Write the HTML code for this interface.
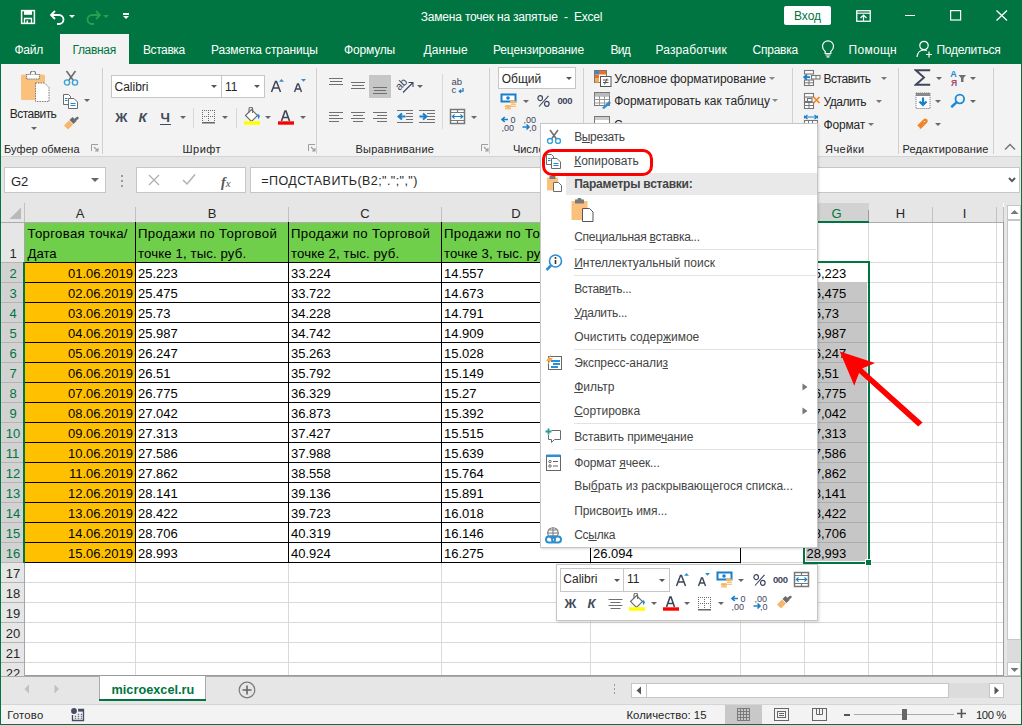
<!DOCTYPE html>
<html><head><meta charset="utf-8"><style>
*{box-sizing:border-box;margin:0;padding:0}
html,body{width:1022px;height:725px;overflow:hidden;background:#fff;font-family:"Liberation Sans",sans-serif;position:relative}
.a{position:absolute;display:block}
.t{position:absolute;white-space:nowrap}
u{text-decoration:underline;text-decoration-thickness:1px;text-underline-offset:1px;}
</style></head><body>
<div class="a" style="left:0px;top:0px;width:1022px;height:64px;background:#007541;"></div>
<svg class="a" style="left:20px;top:9px;" width="16" height="16" viewBox="0 0 16 16"><rect x="1.6" y="1.6" width="12.8" height="12.8" fill="none" stroke="#fff" stroke-width="1.5"/><rect x="4" y="1.6" width="8" height="4.2" fill="#fff"/><path d="M4.5 14.4V9.5H11.5V14.4" fill="none" stroke="#fff" stroke-width="1.3"/><rect x="6.5" y="11.5" width="1.6" height="3" fill="#fff"/></svg>
<svg class="a" style="left:49px;top:9px;" width="18" height="16" viewBox="0 0 18 16"><path d="M6 2L2 6L6 10" fill="none" stroke="#fff" stroke-width="1.8"/><path d="M2.5 6H10a4.5 4.5 0 0 1 0 9H8" fill="none" stroke="#fff" stroke-width="1.8"/></svg>
<svg class="a" style="left:69px;top:15px;" width="6" height="4" viewBox="0 0 6 4"><path d="M0 0H6L3 3Z" fill="#fff"/></svg>
<svg class="a" style="left:84px;top:9px;" width="18" height="16" viewBox="0 0 18 16"><path d="M12 2L16 6L12 10" fill="none" stroke="#25a150" stroke-width="1.8"/><path d="M15.5 6H8a4.5 4.5 0 0 0 0 9H10" fill="none" stroke="#25a150" stroke-width="1.8"/></svg>
<svg class="a" style="left:103px;top:15px;" width="6" height="4" viewBox="0 0 6 4"><path d="M0 0H6L3 3Z" fill="#25a150"/></svg>
<div class="a" style="left:123px;top:13px;width:6px;height:1.5px;background:#fff;"></div>
<svg class="a" style="left:123px;top:16px;" width="6" height="4" viewBox="0 0 6 4"><path d="M0 0H6L3 3Z" fill="#fff"/></svg>
<div class="t" style="left:420.8px;top:11.1px;font-size:12px;line-height:13.8px;color:#fff;letter-spacing:-0.198px;">Замена точек на запятые&nbsp; -&nbsp; Excel</div>
<div class="a" style="left:784px;top:6px;width:47px;height:19px;background:#fff;border-radius:2px"></div>
<div class="t" style="left:807.5px;top:10.1px;font-size:12px;line-height:13.8px;color:#007541;transform:translateX(-50%);">Вход</div>
<svg class="a" style="left:856px;top:10px;" width="15" height="12" viewBox="0 0 15 12"><rect x="0.75" y="0.75" width="13.5" height="10.5" fill="none" stroke="#fff" stroke-width="1.3"/><path d="M1 3.2H14" stroke="#fff" stroke-width="1.2"/><path d="M4.5 8L7.5 5L10.5 8M7.5 5V11" fill="none" stroke="#fff" stroke-width="1.2"/></svg>
<div class="a" style="left:905px;top:15px;width:10px;height:1.2px;background:#fff;"></div>
<svg class="a" style="left:950px;top:10px;" width="12" height="11" viewBox="0 0 12 11"><rect x="0.6" y="0.6" width="10" height="9.4" fill="none" stroke="#fff" stroke-width="1.2"/></svg>
<svg class="a" style="left:996px;top:10px;" width="12" height="11" viewBox="0 0 12 11"><path d="M0.5 0.5L11 10.5M11 0.5L0.5 10.5" stroke="#fff" stroke-width="1.3"/></svg>
<div class="a" style="left:60px;top:34px;width:69px;height:30px;background:#f3f3f3;"></div>
<div class="t" style="left:14.5px;top:43.6px;font-size:12px;line-height:13.8px;color:#fff;letter-spacing:-0.254px;">Файл</div>
<div class="t" style="left:72.4px;top:43.6px;font-size:12px;line-height:13.8px;color:#007541;letter-spacing:-0.312px;">Главная</div>
<div class="t" style="left:143px;top:43.6px;font-size:12px;line-height:13.8px;color:#fff;letter-spacing:-0.416px;">Вставка</div>
<div class="t" style="left:211px;top:43.6px;font-size:12px;line-height:13.8px;color:#fff;letter-spacing:-0.122px;">Разметка страницы</div>
<div class="t" style="left:344px;top:43.6px;font-size:12px;line-height:13.8px;color:#fff;letter-spacing:-0.174px;">Формулы</div>
<div class="t" style="left:423.4px;top:43.6px;font-size:12px;line-height:13.8px;color:#fff;letter-spacing:0.173px;">Данные</div>
<div class="t" style="left:492.9px;top:43.6px;font-size:12px;line-height:13.8px;color:#fff;letter-spacing:-0.112px;">Рецензирование</div>
<div class="t" style="left:610.4px;top:43.6px;font-size:12px;line-height:13.8px;color:#fff;letter-spacing:-0.706px;">Вид</div>
<div class="t" style="left:655.6px;top:43.6px;font-size:12px;line-height:13.8px;color:#fff;letter-spacing:0.111px;">Разработчик</div>
<div class="t" style="left:752.6px;top:43.6px;font-size:12px;line-height:13.8px;color:#fff;letter-spacing:-0.254px;">Справка</div>
<div class="t" style="left:848.5px;top:43.6px;font-size:12px;line-height:13.8px;color:#fff;letter-spacing:0.294px;">Помощн</div>
<div class="t" style="left:936.4px;top:43.6px;font-size:12px;line-height:13.8px;color:#fff;letter-spacing:-0.217px;">Поделиться</div>
<svg class="a" style="left:821px;top:40px;" width="14" height="18" viewBox="0 0 14 18"><path d="M4.2 11.5C2.5 10.2 1.5 8.3 1.5 6.3A5.5 5.5 0 0 1 12.5 6.3C12.5 8.3 11.5 10.2 9.8 11.5V13.5H4.2Z" fill="none" stroke="#fff" stroke-width="1.2"/><path d="M4.5 15H9.5M5.5 16.8H8.5" stroke="#fff" stroke-width="1.2"/></svg>
<svg class="a" style="left:916px;top:40px;" width="17" height="18" viewBox="0 0 17 18"><circle cx="8" cy="5.5" r="4.2" fill="none" stroke="#fff" stroke-width="1.2"/><path d="M1 17C1.5 12.5 4 10 8 10C9 10 10 10.2 10.8 10.6" fill="none" stroke="#fff" stroke-width="1.2"/><path d="M13 11.5V17.5M10 14.5H16" stroke="#fff" stroke-width="1.2"/></svg>
<div class="a" style="left:0px;top:64px;width:1022px;height:92px;background:#f3f3f3;"></div>
<div class="a" style="left:0px;top:156px;width:1022px;height:1px;background:#d4d4d4;"></div>
<div class="a" style="left:102px;top:68px;width:1px;height:86px;background:#d0d0d0;"></div>
<div class="a" style="left:316px;top:68px;width:1px;height:86px;background:#d0d0d0;"></div>
<div class="a" style="left:489px;top:68px;width:1px;height:86px;background:#d0d0d0;"></div>
<div class="a" style="left:583px;top:68px;width:1px;height:86px;background:#d0d0d0;"></div>
<div class="a" style="left:792px;top:68px;width:1px;height:86px;background:#d0d0d0;"></div>
<div class="a" style="left:898px;top:68px;width:1px;height:86px;background:#d0d0d0;"></div>
<div class="a" style="left:993px;top:68px;width:1px;height:86px;background:#d0d0d0;"></div>
<div class="a" style="left:442px;top:74px;width:1px;height:55px;background:#d8d8d8;"></div>
<div class="a" style="left:193px;top:108px;width:1px;height:20px;background:#d8d8d8;"></div>
<div class="a" style="left:236px;top:108px;width:1px;height:20px;background:#d8d8d8;"></div>
<div class="t" style="left:4px;top:142.65px;font-size:11px;line-height:12.65px;color:#262626;letter-spacing:0.079px;">Буфер обмена</div>
<div class="t" style="left:182.6px;top:142.65px;font-size:11px;line-height:12.65px;color:#262626;letter-spacing:0.419px;">Шрифт</div>
<div class="t" style="left:355.5px;top:142.65px;font-size:11px;line-height:12.65px;color:#262626;letter-spacing:0.248px;">Выравнивание</div>
<div class="t" style="left:512.9px;top:142.65px;font-size:11px;line-height:12.65px;color:#262626;">Число</div>
<div class="t" style="left:825px;top:142.65px;font-size:11px;line-height:12.65px;color:#262626;letter-spacing:0.466px;">Ячейки</div>
<div class="t" style="left:902.5px;top:142.65px;font-size:11px;line-height:12.65px;color:#262626;letter-spacing:0.157px;">Редактирование</div>
<svg class="a" style="left:90.5px;top:144px;opacity:.8" width="8" height="8" viewBox="0 0 8 8"><path d="M0.5 7V0.5H7" fill="none" stroke="#8a8a8a" stroke-width="1"/><path d="M3 3L7 7M4 7H7V4" fill="none" stroke="#8a8a8a" stroke-width="1.1"/></svg>
<svg class="a" style="left:308px;top:144px;opacity:.8" width="8" height="8" viewBox="0 0 8 8"><path d="M0.5 7V0.5H7" fill="none" stroke="#8a8a8a" stroke-width="1"/><path d="M3 3L7 7M4 7H7V4" fill="none" stroke="#8a8a8a" stroke-width="1.1"/></svg>
<svg class="a" style="left:481px;top:144px;opacity:.8" width="8" height="8" viewBox="0 0 8 8"><path d="M0.5 7V0.5H7" fill="none" stroke="#8a8a8a" stroke-width="1"/><path d="M3 3L7 7M4 7H7V4" fill="none" stroke="#8a8a8a" stroke-width="1.1"/></svg>
<svg class="a" style="left:573px;top:144px;opacity:.8" width="8" height="8" viewBox="0 0 8 8"><path d="M0.5 7V0.5H7" fill="none" stroke="#8a8a8a" stroke-width="1"/><path d="M3 3L7 7M4 7H7V4" fill="none" stroke="#8a8a8a" stroke-width="1.1"/></svg>
<svg class="a" style="left:1004px;top:143px;" width="12" height="8" viewBox="0 0 12 8"><path d="M1 6.5L6 1.5L11 6.5" fill="none" stroke="#777" stroke-width="1.5"/></svg>
<svg class="a" style="left:20px;top:71px;" width="30" height="32" viewBox="0 0 30 32"><rect x="1" y="3.5" width="24" height="25.5" rx="1.5" fill="#fbc17c"/><rect x="6.5" y="3.5" width="13" height="4.5" fill="#fff" stroke="#7a7a7a" stroke-width="1.2" stroke-dasharray="1.2 0.6"/><path d="M10.5 3.5V2.2A2.5 2.2 0 0 1 15.5 2.2V3.5" fill="#fff" stroke="#7a7a7a" stroke-width="1.2"/><path d="M15.5 12H24.5L29 16.5V30.5H15.5Z" fill="#fff" stroke="#7a7a7a" stroke-width="1" stroke-dasharray="1.5 1"/></svg>
<div class="t" style="left:9.8px;top:107.9px;font-size:12px;line-height:13.8px;color:#262626;letter-spacing:-0.547px;">Вставить</div>
<svg class="a" style="left:30.5px;top:127px;" width="6" height="4" viewBox="0 0 6 4"><path d="M0 0H6L3 3Z" fill="#666"/></svg>
<svg class="a" style="left:63px;top:70px;" width="16" height="16" viewBox="0 0 16 16"><path d="M3.5 1L10 10M12.5 1L6 10" stroke="#6b6b6b" stroke-width="1.6"/><circle cx="4" cy="12.5" r="2.6" fill="none" stroke="#3aa0d8" stroke-width="1.4"/><circle cx="12" cy="12.5" r="2.6" fill="none" stroke="#3aa0d8" stroke-width="1.4"/></svg>
<svg class="a" style="left:62px;top:93px;" width="17" height="16" viewBox="0 0 17 16"><path d="M1.5 1.5H6.5L8.5 3.5V11.5H1.5Z" fill="#fff" stroke="#6b6b6b" stroke-width="1"/><path d="M3 5.5H5.5M3 7.5H5.5" stroke="#1a8ad4" stroke-width="1"/><path d="M6.5 5.5H12L15.5 9V15.5H6.5Z" fill="#fff" stroke="#6b6b6b" stroke-width="1"/><path d="M8.5 10.5H13.5M8.5 12.5H13.5" stroke="#1a8ad4" stroke-width="1"/></svg>
<svg class="a" style="left:84px;top:99px;" width="6" height="4" viewBox="0 0 6 4"><path d="M0 0H6L3 3Z" fill="#666"/></svg>
<svg class="a" style="left:63px;top:116px;" width="17" height="15" viewBox="0 0 17 15"><path d="M1 9.5L6 4.5L10 8.5L5 13.5Z" fill="#f9b46a"/><path d="M6.5 4L9.5 1L13.5 5L10.5 8Z" fill="#6b6b6b"/><path d="M11 3L14.5 0.5L16 2L13 5" fill="#6b6b6b"/></svg>
<div class="a" style="left:111px;top:75px;width:111px;height:23px;background:#fff;border:1px solid #c6c6c6"></div>
<div class="a" style="left:221px;top:75px;width:44px;height:23px;background:#fff;border:1px solid #c6c6c6"></div>
<div class="t" style="left:114.5px;top:81.1px;font-size:12px;line-height:13.8px;color:#262626;">Calibri</div>
<div class="t" style="left:225px;top:81.1px;font-size:12px;line-height:13.8px;color:#262626;">11</div>
<svg class="a" style="left:211px;top:85px;" width="6" height="4" viewBox="0 0 6 4"><path d="M0 0H6L3 3Z" fill="#555"/></svg>
<svg class="a" style="left:254px;top:85px;" width="6" height="4" viewBox="0 0 6 4"><path d="M0 0H6L3 3Z" fill="#555"/></svg>
<svg class="a" style="left:270px;top:78px;" width="15" height="15" viewBox="0 0 15 15"><path d="M1.5 14L5.5 3.5H6.5L10.5 14M3 10H9" fill="none" stroke="#3f465a" stroke-width="1.5"/><path d="M9 3.8L11.5 1L14 3.8Z" fill="#2b8fd1"/></svg>
<svg class="a" style="left:293px;top:78px;" width="14" height="15" viewBox="0 0 14 15"><path d="M1.5 14L4.5 6H5.5L8.5 14M2.7 11H7.3" fill="none" stroke="#3f465a" stroke-width="1.4"/><path d="M8 1H13L10.5 3.8Z" fill="#2b8fd1"/></svg>
<div class="t" style="left:115.2px;top:109.72px;font-size:13.5px;line-height:15.52px;color:#444b5a;font-weight:bold;letter-spacing:0.297px;">Ж</div>
<div class="t" style="left:138.5px;top:109.72px;font-size:13.5px;line-height:15.52px;color:#444b5a;font-weight:bold;font-style:italic">К</div>
<div class="t" style="left:160.5px;top:110.12px;font-size:13.5px;line-height:15.52px;color:#444b5a;font-weight:bold;">Ч</div>
<div class="a" style="left:160px;top:124px;width:11px;height:1.3px;background:#444b5a;"></div>
<svg class="a" style="left:179.6px;top:116px;" width="6" height="4" viewBox="0 0 6 4"><path d="M0 0H6L3 3Z" fill="#666"/></svg>
<svg class="a" style="left:202px;top:110px;" width="14" height="14" viewBox="0 0 14 14"><g fill="#6a6a6a"><rect x="0" y="0" width="1" height="1"/><rect x="2" y="0" width="1" height="1"/><rect x="4" y="0" width="1" height="1"/><rect x="6" y="0" width="1" height="1"/><rect x="8" y="0" width="1" height="1"/><rect x="10" y="0" width="1" height="1"/><rect x="12" y="0" width="1" height="1"/><rect x="0" y="6" width="1" height="1"/><rect x="2" y="6" width="1" height="1"/><rect x="4" y="6" width="1" height="1"/><rect x="6" y="6" width="1" height="1"/><rect x="8" y="6" width="1" height="1"/><rect x="10" y="6" width="1" height="1"/><rect x="12" y="6" width="1" height="1"/><rect x="0" y="2" width="1" height="1"/><rect x="0" y="4" width="1" height="1"/><rect x="0" y="6" width="1" height="1"/><rect x="0" y="8" width="1" height="1"/><rect x="0" y="10" width="1" height="1"/><rect x="6" y="2" width="1" height="1"/><rect x="6" y="4" width="1" height="1"/><rect x="6" y="6" width="1" height="1"/><rect x="6" y="8" width="1" height="1"/><rect x="6" y="10" width="1" height="1"/><rect x="12" y="2" width="1" height="1"/><rect x="12" y="4" width="1" height="1"/><rect x="12" y="6" width="1" height="1"/><rect x="12" y="8" width="1" height="1"/><rect x="12" y="10" width="1" height="1"/></g><rect x="0" y="12" width="13" height="1.5" fill="#666"/></svg>
<svg class="a" style="left:222.4px;top:116px;" width="6" height="4" viewBox="0 0 6 4"><path d="M0 0H6L3 3Z" fill="#666"/></svg>
<svg class="a" style="left:243px;top:107px;" width="18" height="18" viewBox="0 0 18 18"><path d="M2.5 8.5L8.5 2.5L14.5 8.5L8.5 14.5Z" fill="#fff" stroke="#6a6a6a" stroke-width="1.1"/><path d="M6 5.5V2A1.8 1.8 0 0 1 9.6 2V6" fill="none" stroke="#6a6a6a" stroke-width="1.1"/><path d="M14.8 6.5L17 9L15.5 12.5L14.5 9Z" fill="#1a8ad4"/><rect x="1" y="14.2" width="16" height="3.6" fill="#ffff00"/></svg>
<svg class="a" style="left:265.4px;top:116px;" width="6" height="4" viewBox="0 0 6 4"><path d="M0 0H6L3 3Z" fill="#666"/></svg>
<svg class="a" style="left:277px;top:109px;" width="17" height="16" viewBox="0 0 17 16"><path d="M4.5 12L8 2H9L12.5 12M5.8 8.5H11.2" fill="none" stroke="#3f465a" stroke-width="1.6"/><rect x="1" y="12.3" width="16" height="3.4" fill="#ff0000"/></svg>
<svg class="a" style="left:299.6px;top:116px;" width="6" height="4" viewBox="0 0 6 4"><path d="M0 0H6L3 3Z" fill="#666"/></svg>
<div class="a" style="left:329px;top:78px;width:14px;height:1px;background:#707070;"></div>
<div class="a" style="left:330px;top:81px;width:12px;height:1px;background:#707070;"></div>
<div class="a" style="left:329px;top:84px;width:14px;height:1px;background:#707070;"></div>
<div class="a" style="left:351px;top:82px;width:14px;height:1px;background:#707070;"></div>
<div class="a" style="left:352px;top:85px;width:12px;height:1px;background:#707070;"></div>
<div class="a" style="left:351px;top:88px;width:14px;height:1px;background:#707070;"></div>
<div class="a" style="left:369px;top:75px;width:22px;height:23px;background:#c6c6c6;"></div>
<div class="a" style="left:373px;top:87px;width:14px;height:1px;background:#707070;"></div>
<div class="a" style="left:374px;top:90px;width:12px;height:1px;background:#707070;"></div>
<div class="a" style="left:373px;top:93px;width:14px;height:1px;background:#707070;"></div>
<div class="a" style="left:329px;top:112px;width:14px;height:1px;background:#707070;"></div>
<div class="a" style="left:351px;top:112px;width:14px;height:1px;background:#707070;"></div>
<div class="a" style="left:373px;top:112px;width:14px;height:1px;background:#707070;"></div>
<div class="a" style="left:329px;top:115px;width:10px;height:1px;background:#707070;"></div>
<div class="a" style="left:353px;top:115px;width:10px;height:1px;background:#707070;"></div>
<div class="a" style="left:377px;top:115px;width:10px;height:1px;background:#707070;"></div>
<div class="a" style="left:329px;top:118px;width:14px;height:1px;background:#707070;"></div>
<div class="a" style="left:351px;top:118px;width:14px;height:1px;background:#707070;"></div>
<div class="a" style="left:373px;top:118px;width:14px;height:1px;background:#707070;"></div>
<div class="a" style="left:329px;top:121px;width:10px;height:1px;background:#707070;"></div>
<div class="a" style="left:353px;top:121px;width:10px;height:1px;background:#707070;"></div>
<div class="a" style="left:377px;top:121px;width:10px;height:1px;background:#707070;"></div>
<svg class="a" style="left:396px;top:77px;" width="19" height="17" viewBox="0 0 19 17"><text x="0" y="0" font-size="11" fill="#3f465e" font-family="Liberation Sans" transform="translate(3.5 14) rotate(-45)">ab</text><path d="M7 15.5L16.5 6M12.5 5.5H17V10" fill="none" stroke="#3f465e" stroke-width="1.1"/></svg>
<svg class="a" style="left:416.5px;top:85px;" width="6" height="4" viewBox="0 0 6 4"><path d="M0 0H6L3 3Z" fill="#666"/></svg>
<svg class="a" style="left:450px;top:77px;" width="16" height="17" viewBox="0 0 16 17"><text x="1.5" y="8.3" font-size="9.5" fill="#3f465e" font-family="Liberation Sans">ab</text><text x="1.5" y="16" font-size="9.5" fill="#3f465e" font-family="Liberation Sans">c</text><path d="M13 11V14.2H9.5M11 12.6L9.3 14.2L11 15.8" fill="none" stroke="#1a7fc9" stroke-width="1.3"/></svg>
<div class="a" style="left:397px;top:110px;width:16px;height:1px;background:#707070;"></div>
<div class="a" style="left:406px;top:113px;width:7px;height:1px;background:#707070;"></div>
<div class="a" style="left:406px;top:116px;width:7px;height:1px;background:#707070;"></div>
<div class="a" style="left:406px;top:119px;width:7px;height:1px;background:#707070;"></div>
<div class="a" style="left:397px;top:122px;width:16px;height:1px;background:#707070;"></div>
<div class="a" style="left:419px;top:110px;width:16px;height:1px;background:#707070;"></div>
<div class="a" style="left:427px;top:113px;width:8px;height:1px;background:#707070;"></div>
<div class="a" style="left:427px;top:116px;width:8px;height:1px;background:#707070;"></div>
<div class="a" style="left:427px;top:119px;width:8px;height:1px;background:#707070;"></div>
<div class="a" style="left:419px;top:122px;width:16px;height:1px;background:#707070;"></div>
<svg class="a" style="left:397px;top:112px;" width="9" height="9" viewBox="0 0 9 9"><path d="M8.5 4.5H2M5 1.5L1.5 4.5L5 7.5" fill="none" stroke="#1a7fc9" stroke-width="2"/></svg>
<svg class="a" style="left:419px;top:112px;" width="9" height="9" viewBox="0 0 9 9"><path d="M0.5 4.5H7M4 1.5L7.5 4.5L4 7.5" fill="none" stroke="#1a7fc9" stroke-width="2"/></svg>
<svg class="a" style="left:449px;top:108px;" width="17" height="17" viewBox="0 0 17 17"><rect x="1.5" y="1.5" width="14" height="14" fill="#fff" stroke="#777" stroke-width="1.5"/><path d="M1 4.5H16M1 12.5H16M8.5 1V4.5M8.5 12.5V16" stroke="#777" stroke-width="1.2"/><path d="M3.5 8.5H13.5M5.5 6.5L3.3 8.5L5.5 10.5M11.5 6.5L13.7 8.5L11.5 10.5" fill="none" stroke="#1a7fc9" stroke-width="1.1"/></svg>
<svg class="a" style="left:471.3px;top:116px;" width="6" height="4" viewBox="0 0 6 4"><path d="M0 0H6L3 3Z" fill="#666"/></svg>
<div class="a" style="left:498px;top:67px;width:78px;height:22px;background:#fff;border:1px solid #c6c6c6"></div>
<div class="t" style="left:501.7px;top:73.1px;font-size:12px;line-height:13.8px;color:#262626;">Общий</div>
<svg class="a" style="left:565.7px;top:77px;" width="6" height="4" viewBox="0 0 6 4"><path d="M0 0H6L3 3Z" fill="#555"/></svg>
<svg class="a" style="left:500px;top:93px;" width="18" height="18" viewBox="0 0 18 18"><rect x="1.5" y="1.5" width="14" height="7" fill="#fff" stroke="#1a7fc9" stroke-width="2"/><circle cx="8" cy="5" r="1.8" fill="#1a7fc9"/><ellipse cx="13" cy="9" rx="3.2" ry="1.4" fill="#f9b460"/><path d="M11 11.3H16M11 13.3H16" stroke="#f9b460" stroke-width="1"/><ellipse cx="8" cy="13.5" rx="3.2" ry="1.4" fill="#f9b460"/><path d="M5 15.8H11" stroke="#f9b460" stroke-width="1.2"/></svg>
<svg class="a" style="left:522.6px;top:99.5px;" width="6" height="4" viewBox="0 0 6 4"><path d="M0 0H6L3 3Z" fill="#666"/></svg>
<svg class="a" style="left:537px;top:95px;" width="13" height="12" viewBox="0 0 13 12"><path d="M11.5 0.8L2 11.5" stroke="#3f465e" stroke-width="1.1"/><ellipse cx="3.2" cy="3.2" rx="2.3" ry="2.5" fill="none" stroke="#3f465e" stroke-width="1.2"/><ellipse cx="9.8" cy="8.8" rx="2.3" ry="2.5" fill="none" stroke="#3f465e" stroke-width="1.2"/></svg>
<div class="t" style="left:557.5px;top:96.22px;font-size:9.5px;line-height:10.92px;color:#3f465e;font-weight:bold;letter-spacing:-0.453px;">000</div>
<svg class="a" style="left:501px;top:116px;" width="17" height="16" viewBox="0 0 17 16"><path d="M1 3.5H7M3.8 1L1 3.5L3.8 6" fill="none" stroke="#1a7fc9" stroke-width="1.6"/><text x="9.5" y="7" font-size="9" fill="#3f465e" font-family="Liberation Sans">0</text><text x="0.5" y="15" font-size="9" fill="#3f465e" font-family="Liberation Sans">,00</text></svg>
<svg class="a" style="left:522px;top:116px;" width="17" height="16" viewBox="0 0 17 16"><text x="1.5" y="7" font-size="9" fill="#3f465e" font-family="Liberation Sans">,00</text><path d="M0.5 11H7M4.5 8.5L7 11L4.5 13.5" fill="none" stroke="#1a7fc9" stroke-width="1.6"/><text x="7" y="15" font-size="9" fill="#3f465e" font-family="Liberation Sans">,0</text></svg>
<svg class="a" style="left:594px;top:70px;" width="18" height="17" viewBox="0 0 18 17"><rect x="0.5" y="0.5" width="12" height="12" fill="#fff" stroke="#777"/><rect x="1" y="1" width="4" height="3.5" fill="#2b8fd1"/><rect x="5" y="1" width="7" height="3.5" fill="#f26b21"/><rect x="1" y="4.5" width="4" height="4" fill="#f26b21"/><rect x="1" y="8.5" width="4" height="4" fill="#f7a94b"/><rect x="6.5" y="6.5" width="10.5" height="10" fill="#fff" stroke="#555"/><path d="M9 10H14.5M9 12.5H14.5M10.5 14.5L13 8.5" stroke="#555" stroke-width="1"/></svg>
<div class="t" style="left:614.2px;top:72.8px;font-size:12px;line-height:13.8px;color:#262626;letter-spacing:-0.038px;">Условное форматирование</div>
<svg class="a" style="left:768.5px;top:77px;" width="6" height="4" viewBox="0 0 6 4"><path d="M0 0H6L3 3Z" fill="#888"/></svg>
<svg class="a" style="left:594px;top:92px;" width="18" height="17" viewBox="0 0 18 17"><rect x="0.5" y="0.5" width="15" height="13" fill="#fff" stroke="#777"/><path d="M0.5 4H15.5M0.5 7.5H15.5M0.5 11H15.5M5.5 0.5V13.5M10.5 0.5V13.5" stroke="#999" stroke-width="1"/><rect x="1" y="1" width="14.5" height="3" fill="#bbb"/><path d="M8 16L15 9L17 11L10 17Z" fill="#2b8fd1"/></svg>
<div class="t" style="left:614.2px;top:95.2px;font-size:12px;line-height:13.8px;color:#262626;letter-spacing:-0.018px;">Форматировать как таблицу</div>
<svg class="a" style="left:772.3px;top:99px;" width="6" height="4" viewBox="0 0 6 4"><path d="M0 0H6L3 3Z" fill="#888"/></svg>
<svg class="a" style="left:594px;top:116px;" width="18" height="8" viewBox="0 0 18 8"><rect x="0.5" y="0.5" width="15" height="10" fill="#fff" stroke="#777"/><rect x="1" y="1" width="14" height="3" fill="#ccc"/></svg>
<div class="t" style="left:614px;top:119.1px;font-size:12px;line-height:13.8px;color:#262626;">С</div>
<svg class="a" style="left:803px;top:69px;" width="19" height="18" viewBox="0 0 19 18"><rect x="1.5" y="1.5" width="9" height="3.5" fill="#fff" stroke="#777" stroke-width="1.1"/><rect x="8.5" y="6.5" width="8.5" height="3.5" fill="#fff" stroke="#777" stroke-width="1.1"/><path d="M13 6.5V10" stroke="#777" stroke-width="1"/><rect x="1.5" y="11" width="9" height="5.5" fill="#fff" stroke="#777" stroke-width="1.1"/><path d="M1.5 13.8H10.5M6 11V16.5" stroke="#777" stroke-width="1"/><path d="M7 8.2H1.5M4 5.6L1.2 8.2L4 10.8" fill="none" stroke="#1a7fc9" stroke-width="1.8"/></svg>
<div class="t" style="left:823.5px;top:73.0px;font-size:12px;line-height:13.8px;color:#262626;letter-spacing:-0.472px;">Вставить</div>
<svg class="a" style="left:880.6px;top:77px;" width="6" height="4" viewBox="0 0 6 4"><path d="M0 0H6L3 3Z" fill="#777"/></svg>
<svg class="a" style="left:803px;top:92px;" width="19" height="18" viewBox="0 0 19 18"><rect x="1.5" y="1.5" width="9" height="3.5" fill="#fff" stroke="#777" stroke-width="1.1"/><path d="M1.5 5V9.5H4.5" fill="none" stroke="#777" stroke-width="1.1"/><rect x="4.5" y="6.5" width="4.5" height="3" fill="#fff" stroke="#777" stroke-width="1.1"/><rect x="1.5" y="10.5" width="9" height="6" fill="#fff" stroke="#777" stroke-width="1.1"/><path d="M1.5 13.5H10.5M6 10.5V16.5" stroke="#777" stroke-width="1"/><path d="M10.5 5L16.5 11M16.5 5L10.5 11" stroke="#f7821f" stroke-width="1.7"/></svg>
<div class="t" style="left:823.5px;top:95.8px;font-size:12px;line-height:13.8px;color:#262626;letter-spacing:-0.475px;">Удалить</div>
<svg class="a" style="left:876.3px;top:100px;" width="6" height="4" viewBox="0 0 6 4"><path d="M0 0H6L3 3Z" fill="#777"/></svg>
<svg class="a" style="left:803px;top:114px;" width="18" height="11" viewBox="0 0 18 11"><path d="M1.5 1.5V4.5M14.5 1.5V4.5M2 3H14M4.5 1L2 3L4.5 5M11.5 1L14 3L11.5 5" fill="none" stroke="#1a7fc9" stroke-width="1.1"/><rect x="1.5" y="6.5" width="13" height="6" fill="#fff" stroke="#777" stroke-width="1.1"/><path d="M5.5 6.5V9M9.5 6.5V9" stroke="#777"/></svg>
<div class="t" style="left:823.5px;top:118.6px;font-size:12px;line-height:13.8px;color:#262626;letter-spacing:-0.190px;">Формат</div>
<svg class="a" style="left:868px;top:123px;" width="6" height="4" viewBox="0 0 6 4"><path d="M0 0H6L3 3Z" fill="#777"/></svg>
<svg class="a" style="left:914px;top:69px;" width="18" height="17" viewBox="0 0 18 17"><path d="M16.2 1.3H1.8L10 8.5L1.8 15.7H16.2" fill="none" stroke="#3f465e" stroke-width="1.9" stroke-linejoin="miter"/></svg>
<svg class="a" style="left:936.4px;top:77px;" width="6" height="4" viewBox="0 0 6 4"><path d="M0 0H6L3 3Z" fill="#666"/></svg>
<svg class="a" style="left:949px;top:68px;" width="19" height="20" viewBox="0 0 19 20"><text x="1.2" y="8.6" font-size="9" font-weight="bold" fill="#1a8ad4" font-family="Liberation Sans">A</text><text x="2" y="18" font-size="8.5" font-weight="bold" fill="#a34a6a" font-family="Liberation Sans">Я</text><path d="M9.5 7H17L14.5 10V14H12V10Z" fill="#6e6e6e"/></svg>
<svg class="a" style="left:969.6px;top:77px;" width="6" height="4" viewBox="0 0 6 4"><path d="M0 0H6L3 3Z" fill="#666"/></svg>
<svg class="a" style="left:915px;top:92px;" width="17" height="18" viewBox="0 0 17 18"><rect x="1" y="1" width="14" height="15.5" fill="#fff" stroke="#808080" stroke-width="1" stroke-dasharray="1.2 0.8"/><rect x="1" y="1" width="14" height="3" fill="#8a8a8a"/><path d="M8 5.5V13M4.5 9.5L8 13L11.5 9.5" fill="none" stroke="#1a7fc9" stroke-width="2.2"/></svg>
<svg class="a" style="left:934.5px;top:100px;" width="6" height="4" viewBox="0 0 6 4"><path d="M0 0H6L3 3Z" fill="#666"/></svg>
<svg class="a" style="left:950px;top:93px;" width="16" height="15" viewBox="0 0 16 15"><circle cx="9.8" cy="6" r="4.3" fill="none" stroke="#1a8ad4" stroke-width="1.8"/><path d="M6.7 9.2L2 13.5" stroke="#1a8ad4" stroke-width="2.4" stroke-linecap="round"/></svg>
<svg class="a" style="left:969.6px;top:100px;" width="6" height="4" viewBox="0 0 6 4"><path d="M0 0H6L3 3Z" fill="#666"/></svg>
<svg class="a" style="left:916px;top:117px;" width="13" height="13" viewBox="0 0 13 13"><path d="M1.2 8.5L7.5 2.2C8.5 1.2 10 1.2 11 2.2C12 3.2 12 4.7 11 5.7L4.5 12.2Z" fill="#f2852a"/><path d="M1.5 9L4 11.5" stroke="#f3f3f3" stroke-width="0.9"/><circle cx="8.5" cy="4.5" r="0.6" fill="#fff"/></svg>
<svg class="a" style="left:934.5px;top:123px;" width="6" height="4" viewBox="0 0 6 4"><path d="M0 0H6L3 3Z" fill="#666"/></svg>
<div class="a" style="left:0px;top:157px;width:1022px;height:46px;background:#e6e6e6;"></div>
<div class="a" style="left:4px;top:167px;width:102px;height:26px;background:#fff;border:1px solid #c6c6c6"></div>
<div class="t" style="left:11px;top:174.65px;font-size:13px;line-height:14.95px;color:#262626;">G2</div>
<svg class="a" style="left:91px;top:178px;" width="8" height="5" viewBox="0 0 8 5"><path d="M0 0H8L4 4Z" fill="#666"/></svg>
<div class="a" style="left:120.5px;top:175px;width:2px;height:2px;background:#9a9a9a;"></div>
<div class="a" style="left:120.5px;top:180px;width:2px;height:2px;background:#9a9a9a;"></div>
<div class="a" style="left:120.5px;top:185px;width:2px;height:2px;background:#9a9a9a;"></div>
<div class="a" style="left:136px;top:167px;width:110px;height:26px;background:#fff;border:1px solid #c6c6c6"></div>
<svg class="a" style="left:148px;top:174px;" width="12" height="12" viewBox="0 0 12 12"><path d="M1 1L11 11M11 1L1 11" stroke="#b0b0b0" stroke-width="1.3"/></svg>
<svg class="a" style="left:182px;top:173px;" width="14" height="13" viewBox="0 0 14 13"><path d="M1 7L5 11L13 1.5" fill="none" stroke="#b0b0b0" stroke-width="1.5"/></svg>
<div class="t" style="left:221px;top:174.2px;font-size:14px;line-height:16.1px;color:#555;"><i style="font-family:Liberation Serif;font-weight:bold">f</i><i style="font-family:Liberation Serif;font-size:11px">x</i></div>
<div class="a" style="left:250px;top:167px;width:770px;height:26px;background:#fff;border:1px solid #c6c6c6"></div>
<div class="t" style="left:261.3px;top:173.88px;font-size:12.5px;line-height:14.37px;color:#262626;letter-spacing:0.422px;">=ПОДСТАВИТЬ(B2;".";",")</div>
<svg class="a" style="left:1007.5px;top:176.5px;" width="8" height="6" viewBox="0 0 8 6"><path d="M1 1L4 4.2L7 1" fill="none" stroke="#555" stroke-width="1.9"/></svg>
<div class="a" style="left:0px;top:203px;width:1003px;height:19px;background:#e6e6e6;"></div>
<div class="a" style="left:0px;top:222px;width:1003px;height:1px;background:#ababab;"></div>
<svg class="a" style="left:9px;top:207px;" width="13" height="13" viewBox="0 0 13 13"><path d="M12 0.5V12H0.5Z" fill="#b9b9b9"/></svg>
<div class="a" style="left:135px;top:207px;width:1px;height:15px;background:#c0c0c0;"></div>
<div class="t" style="left:80.0px;top:206.95px;font-size:13px;line-height:14.95px;color:#262626;transform:translateX(-50%);">A</div>
<div class="a" style="left:288px;top:207px;width:1px;height:15px;background:#c0c0c0;"></div>
<div class="t" style="left:212.0px;top:206.95px;font-size:13px;line-height:14.95px;color:#262626;transform:translateX(-50%);">B</div>
<div class="a" style="left:441px;top:207px;width:1px;height:15px;background:#c0c0c0;"></div>
<div class="t" style="left:365.0px;top:206.95px;font-size:13px;line-height:14.95px;color:#262626;transform:translateX(-50%);">C</div>
<div class="a" style="left:590px;top:207px;width:1px;height:15px;background:#c0c0c0;"></div>
<div class="t" style="left:516.0px;top:206.95px;font-size:13px;line-height:14.95px;color:#262626;transform:translateX(-50%);">D</div>
<div class="a" style="left:740px;top:207px;width:1px;height:15px;background:#c0c0c0;"></div>
<div class="t" style="left:665.5px;top:206.95px;font-size:13px;line-height:14.95px;color:#262626;transform:translateX(-50%);">E</div>
<div class="a" style="left:804px;top:207px;width:1px;height:15px;background:#c0c0c0;"></div>
<div class="t" style="left:772.5px;top:206.95px;font-size:13px;line-height:14.95px;color:#262626;transform:translateX(-50%);">F</div>
<div class="a" style="left:805px;top:203px;width:64px;height:19px;background:#d2d2d2;"></div>
<div class="a" style="left:868px;top:210px;width:1px;height:12px;background:#9b9b9b;"></div>
<div class="t" style="left:836.5px;top:206.95px;font-size:13px;line-height:14.95px;color:#007541;transform:translateX(-50%);">G</div>
<div class="a" style="left:932px;top:207px;width:1px;height:15px;background:#c0c0c0;"></div>
<div class="t" style="left:900.5px;top:206.95px;font-size:13px;line-height:14.95px;color:#262626;transform:translateX(-50%);">H</div>
<div class="a" style="left:996px;top:207px;width:1px;height:15px;background:#c0c0c0;"></div>
<div class="t" style="left:964.5px;top:206.95px;font-size:13px;line-height:14.95px;color:#262626;transform:translateX(-50%);">I</div>
<div class="a" style="left:1003px;top:207px;width:1px;height:15px;background:#c0c0c0;"></div>
<div class="a" style="left:24px;top:203px;width:1px;height:19px;background:#c0c0c0;"></div>
<div class="a" style="left:805px;top:221px;width:64px;height:2px;background:#007541;"></div>
<div class="a" style="left:1px;top:223px;width:23px;height:453px;background:#e6e6e6;"></div>
<div class="a" style="left:1px;top:262px;width:23px;height:1px;background:#b4b4b4;"></div>
<div class="t" style="left:9.5px;top:247.15px;font-size:13px;line-height:14.95px;color:#262626;">1</div>
<div class="a" style="left:1px;top:263px;width:23px;height:20px;background:#d2d2d2;"></div>
<div class="a" style="left:1px;top:282px;width:23px;height:1px;background:#b4b4b4;"></div>
<div class="t" style="left:9.5px;top:267.15px;font-size:13px;line-height:14.95px;color:#007541;">2</div>
<div class="a" style="left:1px;top:283px;width:23px;height:20px;background:#d2d2d2;"></div>
<div class="a" style="left:1px;top:302px;width:23px;height:1px;background:#b4b4b4;"></div>
<div class="t" style="left:9.5px;top:287.15px;font-size:13px;line-height:14.95px;color:#007541;">3</div>
<div class="a" style="left:1px;top:303px;width:23px;height:20px;background:#d2d2d2;"></div>
<div class="a" style="left:1px;top:322px;width:23px;height:1px;background:#b4b4b4;"></div>
<div class="t" style="left:9.5px;top:307.15px;font-size:13px;line-height:14.95px;color:#007541;">4</div>
<div class="a" style="left:1px;top:323px;width:23px;height:20px;background:#d2d2d2;"></div>
<div class="a" style="left:1px;top:342px;width:23px;height:1px;background:#b4b4b4;"></div>
<div class="t" style="left:9.5px;top:327.15px;font-size:13px;line-height:14.95px;color:#007541;">5</div>
<div class="a" style="left:1px;top:343px;width:23px;height:20px;background:#d2d2d2;"></div>
<div class="a" style="left:1px;top:362px;width:23px;height:1px;background:#b4b4b4;"></div>
<div class="t" style="left:9.5px;top:347.15px;font-size:13px;line-height:14.95px;color:#007541;">6</div>
<div class="a" style="left:1px;top:363px;width:23px;height:20px;background:#d2d2d2;"></div>
<div class="a" style="left:1px;top:382px;width:23px;height:1px;background:#b4b4b4;"></div>
<div class="t" style="left:9.5px;top:367.15px;font-size:13px;line-height:14.95px;color:#007541;">7</div>
<div class="a" style="left:1px;top:383px;width:23px;height:20px;background:#d2d2d2;"></div>
<div class="a" style="left:1px;top:402px;width:23px;height:1px;background:#b4b4b4;"></div>
<div class="t" style="left:9.5px;top:387.15px;font-size:13px;line-height:14.95px;color:#007541;">8</div>
<div class="a" style="left:1px;top:403px;width:23px;height:20px;background:#d2d2d2;"></div>
<div class="a" style="left:1px;top:422px;width:23px;height:1px;background:#b4b4b4;"></div>
<div class="t" style="left:9.5px;top:407.15px;font-size:13px;line-height:14.95px;color:#007541;">9</div>
<div class="a" style="left:1px;top:423px;width:23px;height:20px;background:#d2d2d2;"></div>
<div class="a" style="left:1px;top:442px;width:23px;height:1px;background:#b4b4b4;"></div>
<div class="t" style="left:5.8px;top:427.15px;font-size:13px;line-height:14.95px;color:#007541;">10</div>
<div class="a" style="left:1px;top:443px;width:23px;height:20px;background:#d2d2d2;"></div>
<div class="a" style="left:1px;top:462px;width:23px;height:1px;background:#b4b4b4;"></div>
<div class="t" style="left:5.8px;top:447.15px;font-size:13px;line-height:14.95px;color:#007541;">11</div>
<div class="a" style="left:1px;top:463px;width:23px;height:20px;background:#d2d2d2;"></div>
<div class="a" style="left:1px;top:482px;width:23px;height:1px;background:#b4b4b4;"></div>
<div class="t" style="left:5.8px;top:467.15px;font-size:13px;line-height:14.95px;color:#007541;">12</div>
<div class="a" style="left:1px;top:483px;width:23px;height:20px;background:#d2d2d2;"></div>
<div class="a" style="left:1px;top:502px;width:23px;height:1px;background:#b4b4b4;"></div>
<div class="t" style="left:5.8px;top:487.15px;font-size:13px;line-height:14.95px;color:#007541;">13</div>
<div class="a" style="left:1px;top:503px;width:23px;height:20px;background:#d2d2d2;"></div>
<div class="a" style="left:1px;top:522px;width:23px;height:1px;background:#b4b4b4;"></div>
<div class="t" style="left:5.8px;top:507.15px;font-size:13px;line-height:14.95px;color:#007541;">14</div>
<div class="a" style="left:1px;top:523px;width:23px;height:20px;background:#d2d2d2;"></div>
<div class="a" style="left:1px;top:542px;width:23px;height:1px;background:#b4b4b4;"></div>
<div class="t" style="left:5.8px;top:527.15px;font-size:13px;line-height:14.95px;color:#007541;">15</div>
<div class="a" style="left:1px;top:543px;width:23px;height:20px;background:#d2d2d2;"></div>
<div class="a" style="left:1px;top:562px;width:23px;height:1px;background:#b4b4b4;"></div>
<div class="t" style="left:5.8px;top:547.15px;font-size:13px;line-height:14.95px;color:#007541;">16</div>
<div class="a" style="left:1px;top:582px;width:23px;height:1px;background:#b4b4b4;"></div>
<div class="t" style="left:5.8px;top:567.15px;font-size:13px;line-height:14.95px;color:#262626;">17</div>
<div class="a" style="left:1px;top:602px;width:23px;height:1px;background:#b4b4b4;"></div>
<div class="t" style="left:5.8px;top:587.15px;font-size:13px;line-height:14.95px;color:#262626;">18</div>
<div class="a" style="left:1px;top:622px;width:23px;height:1px;background:#b4b4b4;"></div>
<div class="t" style="left:5.8px;top:607.15px;font-size:13px;line-height:14.95px;color:#262626;">19</div>
<div class="a" style="left:1px;top:642px;width:23px;height:1px;background:#b4b4b4;"></div>
<div class="t" style="left:5.8px;top:627.15px;font-size:13px;line-height:14.95px;color:#262626;">20</div>
<div class="a" style="left:1px;top:662px;width:23px;height:1px;background:#b4b4b4;"></div>
<div class="t" style="left:5.8px;top:647.15px;font-size:13px;line-height:14.95px;color:#262626;">21</div>
<div class="a" style="left:1px;top:682px;width:23px;height:1px;background:#b4b4b4;"></div>
<div class="t" style="left:5.8px;top:667.15px;font-size:13px;line-height:14.95px;color:#262626;">22</div>
<div class="a" style="left:24px;top:222px;width:1px;height:454px;background:#a6a6a6;"></div>
<div class="a" style="left:23px;top:262px;width:2px;height:301px;background:#007541;"></div>
<div class="a" style="left:25px;top:262px;width:978px;height:1px;background:#d9d9d9;"></div>
<div class="a" style="left:25px;top:282px;width:978px;height:1px;background:#d9d9d9;"></div>
<div class="a" style="left:25px;top:302px;width:978px;height:1px;background:#d9d9d9;"></div>
<div class="a" style="left:25px;top:322px;width:978px;height:1px;background:#d9d9d9;"></div>
<div class="a" style="left:25px;top:342px;width:978px;height:1px;background:#d9d9d9;"></div>
<div class="a" style="left:25px;top:362px;width:978px;height:1px;background:#d9d9d9;"></div>
<div class="a" style="left:25px;top:382px;width:978px;height:1px;background:#d9d9d9;"></div>
<div class="a" style="left:25px;top:402px;width:978px;height:1px;background:#d9d9d9;"></div>
<div class="a" style="left:25px;top:422px;width:978px;height:1px;background:#d9d9d9;"></div>
<div class="a" style="left:25px;top:442px;width:978px;height:1px;background:#d9d9d9;"></div>
<div class="a" style="left:25px;top:462px;width:978px;height:1px;background:#d9d9d9;"></div>
<div class="a" style="left:25px;top:482px;width:978px;height:1px;background:#d9d9d9;"></div>
<div class="a" style="left:25px;top:502px;width:978px;height:1px;background:#d9d9d9;"></div>
<div class="a" style="left:25px;top:522px;width:978px;height:1px;background:#d9d9d9;"></div>
<div class="a" style="left:25px;top:542px;width:978px;height:1px;background:#d9d9d9;"></div>
<div class="a" style="left:25px;top:562px;width:978px;height:1px;background:#d9d9d9;"></div>
<div class="a" style="left:25px;top:582px;width:978px;height:1px;background:#d9d9d9;"></div>
<div class="a" style="left:25px;top:602px;width:978px;height:1px;background:#d9d9d9;"></div>
<div class="a" style="left:25px;top:622px;width:978px;height:1px;background:#d9d9d9;"></div>
<div class="a" style="left:25px;top:642px;width:978px;height:1px;background:#d9d9d9;"></div>
<div class="a" style="left:25px;top:662px;width:978px;height:1px;background:#d9d9d9;"></div>
<div class="a" style="left:25px;top:682px;width:978px;height:1px;background:#d9d9d9;"></div>
<div class="a" style="left:135px;top:223px;width:1px;height:453px;background:#d9d9d9;"></div>
<div class="a" style="left:288px;top:223px;width:1px;height:453px;background:#d9d9d9;"></div>
<div class="a" style="left:441px;top:223px;width:1px;height:453px;background:#d9d9d9;"></div>
<div class="a" style="left:590px;top:223px;width:1px;height:453px;background:#d9d9d9;"></div>
<div class="a" style="left:740px;top:223px;width:1px;height:453px;background:#d9d9d9;"></div>
<div class="a" style="left:804px;top:223px;width:1px;height:453px;background:#d9d9d9;"></div>
<div class="a" style="left:868px;top:223px;width:1px;height:453px;background:#d9d9d9;"></div>
<div class="a" style="left:932px;top:223px;width:1px;height:453px;background:#d9d9d9;"></div>
<div class="a" style="left:996px;top:223px;width:1px;height:453px;background:#d9d9d9;"></div>
<div class="a" style="left:1003px;top:223px;width:1px;height:453px;background:#d9d9d9;"></div>
<div class="a" style="left:25px;top:223px;width:565px;height:39px;background:#6fce4a;"></div>
<div class="a" style="left:25px;top:263px;width:110px;height:300px;background:#ffc000;"></div>
<div class="a" style="left:806px;top:282px;width:61px;height:279px;background:#c6c6c6;"></div>
<div class="a" style="left:806px;top:302px;width:61px;height:1px;background:#ababab;"></div>
<div class="a" style="left:806px;top:322px;width:61px;height:1px;background:#ababab;"></div>
<div class="a" style="left:806px;top:342px;width:61px;height:1px;background:#ababab;"></div>
<div class="a" style="left:806px;top:362px;width:61px;height:1px;background:#ababab;"></div>
<div class="a" style="left:806px;top:382px;width:61px;height:1px;background:#ababab;"></div>
<div class="a" style="left:806px;top:402px;width:61px;height:1px;background:#ababab;"></div>
<div class="a" style="left:806px;top:422px;width:61px;height:1px;background:#ababab;"></div>
<div class="a" style="left:806px;top:442px;width:61px;height:1px;background:#ababab;"></div>
<div class="a" style="left:806px;top:462px;width:61px;height:1px;background:#ababab;"></div>
<div class="a" style="left:806px;top:482px;width:61px;height:1px;background:#ababab;"></div>
<div class="a" style="left:806px;top:502px;width:61px;height:1px;background:#ababab;"></div>
<div class="a" style="left:806px;top:522px;width:61px;height:1px;background:#ababab;"></div>
<div class="a" style="left:806px;top:542px;width:61px;height:1px;background:#ababab;"></div>
<div class="a" style="left:135px;top:222px;width:1px;height:341px;background:#000;"></div>
<div class="a" style="left:288px;top:222px;width:1px;height:341px;background:#000;"></div>
<div class="a" style="left:441px;top:222px;width:1px;height:341px;background:#000;"></div>
<div class="a" style="left:590px;top:222px;width:1px;height:341px;background:#000;"></div>
<div class="a" style="left:740px;top:222px;width:1px;height:341px;background:#000;"></div>
<div class="a" style="left:25px;top:262px;width:716px;height:1px;background:#000;"></div>
<div class="a" style="left:25px;top:282px;width:716px;height:1px;background:#000;"></div>
<div class="a" style="left:25px;top:302px;width:716px;height:1px;background:#000;"></div>
<div class="a" style="left:25px;top:322px;width:716px;height:1px;background:#000;"></div>
<div class="a" style="left:25px;top:342px;width:716px;height:1px;background:#000;"></div>
<div class="a" style="left:25px;top:362px;width:716px;height:1px;background:#000;"></div>
<div class="a" style="left:25px;top:382px;width:716px;height:1px;background:#000;"></div>
<div class="a" style="left:25px;top:402px;width:716px;height:1px;background:#000;"></div>
<div class="a" style="left:25px;top:422px;width:716px;height:1px;background:#000;"></div>
<div class="a" style="left:25px;top:442px;width:716px;height:1px;background:#000;"></div>
<div class="a" style="left:25px;top:462px;width:716px;height:1px;background:#000;"></div>
<div class="a" style="left:25px;top:482px;width:716px;height:1px;background:#000;"></div>
<div class="a" style="left:25px;top:502px;width:716px;height:1px;background:#000;"></div>
<div class="a" style="left:25px;top:522px;width:716px;height:1px;background:#000;"></div>
<div class="a" style="left:25px;top:542px;width:716px;height:1px;background:#000;"></div>
<div class="a" style="left:25px;top:562px;width:716px;height:1px;background:#000;"></div>
<div class="t" style="left:27.6px;top:226.06px;font-size:13.2px;line-height:15.18px;color:#000;letter-spacing:0.319px;">Торговая точка/</div>
<div class="t" style="left:27.6px;top:246.06px;font-size:13.2px;line-height:15.18px;color:#000;letter-spacing:-0.051px;">Дата</div>
<div class="t" style="left:138px;top:226.06px;font-size:13.2px;line-height:15.18px;color:#000;letter-spacing:0.385px;">Продажи по Торговой</div>
<div class="t" style="left:138px;top:246.06px;font-size:13.2px;line-height:15.18px;color:#000;letter-spacing:0.123px;">точке 1, тыс. руб.</div>
<div class="t" style="left:291px;top:226.06px;font-size:13.2px;line-height:15.18px;color:#000;letter-spacing:0.385px;">Продажи по Торговой</div>
<div class="t" style="left:291px;top:246.06px;font-size:13.2px;line-height:15.18px;color:#000;letter-spacing:0.123px;">точке 2, тыс. руб.</div>
<div class="t" style="left:444px;top:226.06px;font-size:13.2px;line-height:15.18px;color:#000;letter-spacing:0.385px;">Продажи по Торговой</div>
<div class="t" style="left:444px;top:246.06px;font-size:13.2px;line-height:15.18px;color:#000;letter-spacing:0.123px;">точке 3, тыс. руб.</div>
<div class="t" style="right:889px;top:267.15px;font-size:13px;line-height:14.95px;color:#000;">01.06.2019</div>
<div class="t" style="left:138px;top:267.15px;font-size:13px;line-height:14.95px;color:#000;">25.223</div>
<div class="t" style="left:291px;top:267.15px;font-size:13px;line-height:14.95px;color:#000;">33.224</div>
<div class="t" style="left:444px;top:267.15px;font-size:13px;line-height:14.95px;color:#000;">14.557</div>
<div class="t" style="left:806.5px;top:267.15px;font-size:13px;line-height:14.95px;color:#000;">25,223</div>
<div class="t" style="right:889px;top:287.15px;font-size:13px;line-height:14.95px;color:#000;">02.06.2019</div>
<div class="t" style="left:138px;top:287.15px;font-size:13px;line-height:14.95px;color:#000;">25.475</div>
<div class="t" style="left:291px;top:287.15px;font-size:13px;line-height:14.95px;color:#000;">33.722</div>
<div class="t" style="left:444px;top:287.15px;font-size:13px;line-height:14.95px;color:#000;">14.673</div>
<div class="t" style="left:806.5px;top:287.15px;font-size:13px;line-height:14.95px;color:#000;">25,475</div>
<div class="t" style="right:889px;top:307.15px;font-size:13px;line-height:14.95px;color:#000;">03.06.2019</div>
<div class="t" style="left:138px;top:307.15px;font-size:13px;line-height:14.95px;color:#000;">25.73</div>
<div class="t" style="left:291px;top:307.15px;font-size:13px;line-height:14.95px;color:#000;">34.228</div>
<div class="t" style="left:444px;top:307.15px;font-size:13px;line-height:14.95px;color:#000;">14.791</div>
<div class="t" style="left:806.5px;top:307.15px;font-size:13px;line-height:14.95px;color:#000;">25,73</div>
<div class="t" style="right:889px;top:327.15px;font-size:13px;line-height:14.95px;color:#000;">04.06.2019</div>
<div class="t" style="left:138px;top:327.15px;font-size:13px;line-height:14.95px;color:#000;">25.987</div>
<div class="t" style="left:291px;top:327.15px;font-size:13px;line-height:14.95px;color:#000;">34.742</div>
<div class="t" style="left:444px;top:327.15px;font-size:13px;line-height:14.95px;color:#000;">14.909</div>
<div class="t" style="left:806.5px;top:327.15px;font-size:13px;line-height:14.95px;color:#000;">25,987</div>
<div class="t" style="right:889px;top:347.15px;font-size:13px;line-height:14.95px;color:#000;">05.06.2019</div>
<div class="t" style="left:138px;top:347.15px;font-size:13px;line-height:14.95px;color:#000;">26.247</div>
<div class="t" style="left:291px;top:347.15px;font-size:13px;line-height:14.95px;color:#000;">35.263</div>
<div class="t" style="left:444px;top:347.15px;font-size:13px;line-height:14.95px;color:#000;">15.028</div>
<div class="t" style="left:806.5px;top:347.15px;font-size:13px;line-height:14.95px;color:#000;">26,247</div>
<div class="t" style="right:889px;top:367.15px;font-size:13px;line-height:14.95px;color:#000;">06.06.2019</div>
<div class="t" style="left:138px;top:367.15px;font-size:13px;line-height:14.95px;color:#000;">26.51</div>
<div class="t" style="left:291px;top:367.15px;font-size:13px;line-height:14.95px;color:#000;">35.792</div>
<div class="t" style="left:444px;top:367.15px;font-size:13px;line-height:14.95px;color:#000;">15.149</div>
<div class="t" style="left:806.5px;top:367.15px;font-size:13px;line-height:14.95px;color:#000;">26,51</div>
<div class="t" style="right:889px;top:387.15px;font-size:13px;line-height:14.95px;color:#000;">07.06.2019</div>
<div class="t" style="left:138px;top:387.15px;font-size:13px;line-height:14.95px;color:#000;">26.775</div>
<div class="t" style="left:291px;top:387.15px;font-size:13px;line-height:14.95px;color:#000;">36.329</div>
<div class="t" style="left:444px;top:387.15px;font-size:13px;line-height:14.95px;color:#000;">15.27</div>
<div class="t" style="left:806.5px;top:387.15px;font-size:13px;line-height:14.95px;color:#000;">26,775</div>
<div class="t" style="right:889px;top:407.15px;font-size:13px;line-height:14.95px;color:#000;">08.06.2019</div>
<div class="t" style="left:138px;top:407.15px;font-size:13px;line-height:14.95px;color:#000;">27.042</div>
<div class="t" style="left:291px;top:407.15px;font-size:13px;line-height:14.95px;color:#000;">36.873</div>
<div class="t" style="left:444px;top:407.15px;font-size:13px;line-height:14.95px;color:#000;">15.392</div>
<div class="t" style="left:806.5px;top:407.15px;font-size:13px;line-height:14.95px;color:#000;">27,042</div>
<div class="t" style="right:889px;top:427.15px;font-size:13px;line-height:14.95px;color:#000;">09.06.2019</div>
<div class="t" style="left:138px;top:427.15px;font-size:13px;line-height:14.95px;color:#000;">27.313</div>
<div class="t" style="left:291px;top:427.15px;font-size:13px;line-height:14.95px;color:#000;">37.427</div>
<div class="t" style="left:444px;top:427.15px;font-size:13px;line-height:14.95px;color:#000;">15.515</div>
<div class="t" style="left:806.5px;top:427.15px;font-size:13px;line-height:14.95px;color:#000;">27,313</div>
<div class="t" style="right:889px;top:447.15px;font-size:13px;line-height:14.95px;color:#000;">10.06.2019</div>
<div class="t" style="left:138px;top:447.15px;font-size:13px;line-height:14.95px;color:#000;">27.586</div>
<div class="t" style="left:291px;top:447.15px;font-size:13px;line-height:14.95px;color:#000;">37.988</div>
<div class="t" style="left:444px;top:447.15px;font-size:13px;line-height:14.95px;color:#000;">15.639</div>
<div class="t" style="left:806.5px;top:447.15px;font-size:13px;line-height:14.95px;color:#000;">27,586</div>
<div class="t" style="right:889px;top:467.15px;font-size:13px;line-height:14.95px;color:#000;">11.06.2019</div>
<div class="t" style="left:138px;top:467.15px;font-size:13px;line-height:14.95px;color:#000;">27.862</div>
<div class="t" style="left:291px;top:467.15px;font-size:13px;line-height:14.95px;color:#000;">38.558</div>
<div class="t" style="left:444px;top:467.15px;font-size:13px;line-height:14.95px;color:#000;">15.764</div>
<div class="t" style="left:806.5px;top:467.15px;font-size:13px;line-height:14.95px;color:#000;">27,862</div>
<div class="t" style="right:889px;top:487.15px;font-size:13px;line-height:14.95px;color:#000;">12.06.2019</div>
<div class="t" style="left:138px;top:487.15px;font-size:13px;line-height:14.95px;color:#000;">28.141</div>
<div class="t" style="left:291px;top:487.15px;font-size:13px;line-height:14.95px;color:#000;">39.136</div>
<div class="t" style="left:444px;top:487.15px;font-size:13px;line-height:14.95px;color:#000;">15.891</div>
<div class="t" style="left:806.5px;top:487.15px;font-size:13px;line-height:14.95px;color:#000;">28,141</div>
<div class="t" style="right:889px;top:507.15px;font-size:13px;line-height:14.95px;color:#000;">13.06.2019</div>
<div class="t" style="left:138px;top:507.15px;font-size:13px;line-height:14.95px;color:#000;">28.422</div>
<div class="t" style="left:291px;top:507.15px;font-size:13px;line-height:14.95px;color:#000;">39.723</div>
<div class="t" style="left:444px;top:507.15px;font-size:13px;line-height:14.95px;color:#000;">16.018</div>
<div class="t" style="left:806.5px;top:507.15px;font-size:13px;line-height:14.95px;color:#000;">28,422</div>
<div class="t" style="right:889px;top:527.15px;font-size:13px;line-height:14.95px;color:#000;">14.06.2019</div>
<div class="t" style="left:138px;top:527.15px;font-size:13px;line-height:14.95px;color:#000;">28.706</div>
<div class="t" style="left:291px;top:527.15px;font-size:13px;line-height:14.95px;color:#000;">40.319</div>
<div class="t" style="left:444px;top:527.15px;font-size:13px;line-height:14.95px;color:#000;">16.146</div>
<div class="t" style="left:806.5px;top:527.15px;font-size:13px;line-height:14.95px;color:#000;">28,706</div>
<div class="t" style="right:889px;top:547.15px;font-size:13px;line-height:14.95px;color:#000;">15.06.2019</div>
<div class="t" style="left:138px;top:547.15px;font-size:13px;line-height:14.95px;color:#000;">28.993</div>
<div class="t" style="left:291px;top:547.15px;font-size:13px;line-height:14.95px;color:#000;">40.924</div>
<div class="t" style="left:444px;top:547.15px;font-size:13px;line-height:14.95px;color:#000;">16.275</div>
<div class="t" style="left:806.5px;top:547.15px;font-size:13px;line-height:14.95px;color:#000;">28,993</div>
<div class="t" style="left:593px;top:547.15px;font-size:13px;line-height:14.95px;color:#000;">26.094</div>
<div class="a" style="left:803px;top:261px;width:67px;height:2px;background:#007541;"></div>
<div class="a" style="left:803px;top:261px;width:2px;height:303px;background:#007541;"></div>
<div class="a" style="left:868px;top:261px;width:2px;height:298px;background:#007541;"></div>
<div class="a" style="left:803px;top:562px;width:62px;height:2px;background:#007541;"></div>
<div class="a" style="left:865px;top:559px;width:7px;height:7px;background:#fff;"></div>
<div class="a" style="left:866px;top:560px;width:5px;height:5px;background:#007541;"></div>
<div class="a" style="left:1004px;top:203px;width:18px;height:473px;background:#e6e6e6;"></div>
<div class="a" style="left:1003px;top:222px;width:1px;height:454px;background:#9b9b9b;"></div>
<div class="a" style="left:25px;top:675px;width:979px;height:1px;background:#9b9b9b;"></div>
<div class="a" style="left:1007px;top:205px;width:14px;height:15px;background:#fff;border:1px solid #c6c6c6"></div>
<svg class="a" style="left:1010px;top:209px;" width="9" height="6" viewBox="0 0 9 6"><path d="M0.5 5L4.5 1L8.5 5Z" fill="#777"/></svg>
<div class="a" style="left:1007px;top:220px;width:14px;height:420px;background:#fff;border:1px solid #c6c6c6"></div>
<div class="a" style="left:1007px;top:640px;width:14px;height:22px;background:#dcdcdc;"></div>
<div class="a" style="left:1007px;top:662px;width:14px;height:14px;background:#fff;border:1px solid #c6c6c6"></div>
<svg class="a" style="left:1010px;top:667px;" width="9" height="6" viewBox="0 0 9 6"><path d="M0.5 1L4.5 5L8.5 1Z" fill="#777"/></svg>
<div class="a" style="left:540px;top:123px;width:278px;height:425px;background:#fff;border:1px solid #c6c6c6;box-shadow:1px 1px 2px rgba(0,0,0,.15)"></div>
<div class="t" style="left:574.2px;top:130.7px;font-size:12px;line-height:13.8px;color:#444444;letter-spacing:-0.374px;">В<u>ы</u>резать</div>
<div class="t" style="left:574.2px;top:154.7px;font-size:12px;line-height:13.8px;color:#444444;"><u>К</u>опировать</div>
<div class="a" style="left:566px;top:173px;width:251px;height:22px;background:#e9e9e9;"></div>
<div class="t" style="left:574.2px;top:178.2px;font-size:12px;line-height:13.8px;color:#444;font-weight:bold;letter-spacing:-0.236px;">Параметры вставки:</div>
<div class="t" style="left:574.2px;top:230.8px;font-size:12px;line-height:13.8px;color:#444444;letter-spacing:-0.261px;">Специальная <u>в</u>ставка...</div>
<div class="a" style="left:574px;top:249px;width:242px;height:1px;background:#e2e2e2;"></div>
<div class="t" style="left:574.2px;top:256.6px;font-size:12px;line-height:13.8px;color:#444444;"><u>И</u>нтеллектуальный поиск</div>
<div class="a" style="left:574px;top:275px;width:242px;height:1px;background:#e2e2e2;"></div>
<div class="t" style="left:574.2px;top:282.9px;font-size:12px;line-height:13.8px;color:#444444;letter-spacing:-0.352px;">Встав<u>и</u>ть...</div>
<div class="t" style="left:574.2px;top:306.9px;font-size:12px;line-height:13.8px;color:#444444;letter-spacing:-0.303px;"><u>У</u>далить...</div>
<div class="t" style="left:574.2px;top:330.6px;font-size:12px;line-height:13.8px;color:#444444;letter-spacing:0.015px;">Очистить содер<u>ж</u>имое</div>
<div class="a" style="left:574px;top:349px;width:242px;height:1px;background:#e2e2e2;"></div>
<div class="t" style="left:574.2px;top:356.6px;font-size:12px;line-height:13.8px;color:#444444;letter-spacing:-0.083px;">Экспресс-анали<u>з</u></div>
<div class="t" style="left:574.2px;top:380.8px;font-size:12px;line-height:13.8px;color:#444444;"><u>Ф</u>ильтр</div>
<div class="t" style="left:574.2px;top:404.6px;font-size:12px;line-height:13.8px;color:#444444;"><u>С</u>ортировка</div>
<svg class="a" style="left:802px;top:383px;" width="6" height="8" viewBox="0 0 6 8"><path d="M0.5 0.5L5.5 4L0.5 7.5Z" fill="#777"/></svg>
<svg class="a" style="left:802px;top:407px;" width="6" height="8" viewBox="0 0 6 8"><path d="M0.5 0.5L5.5 4L0.5 7.5Z" fill="#777"/></svg>
<div class="a" style="left:574px;top:423px;width:242px;height:1px;background:#e2e2e2;"></div>
<div class="t" style="left:574.2px;top:430.6px;font-size:12px;line-height:13.8px;color:#444444;letter-spacing:-0.135px;">Вставить приме<u>ч</u>ание</div>
<div class="a" style="left:574px;top:449px;width:242px;height:1px;background:#e2e2e2;"></div>
<div class="t" style="left:574.2px;top:456.7px;font-size:12px;line-height:13.8px;color:#444444;letter-spacing:-0.115px;">Формат <u>я</u>чеек...</div>
<div class="t" style="left:574.2px;top:480.4px;font-size:12px;line-height:13.8px;color:#444444;letter-spacing:-0.018px;">Вы<u>б</u>рать из раскрывающегося списка...</div>
<div class="t" style="left:574.2px;top:504.7px;font-size:12px;line-height:13.8px;color:#444444;letter-spacing:-0.073px;">Присвои<u>т</u>ь имя...</div>
<div class="t" style="left:574.2px;top:528.6px;font-size:12px;line-height:13.8px;color:#444444;letter-spacing:-0.250px;">Сс<u>ы</u>лка</div>
<svg class="a" style="left:546px;top:129px;" width="16" height="15" viewBox="0 0 16 15"><path d="M4 1L10.5 10M12 1L5.5 10" stroke="#6b6b6b" stroke-width="1.5"/><circle cx="4" cy="12" r="2.5" fill="none" stroke="#3aa0d8" stroke-width="1.4"/><circle cx="12" cy="12" r="2.5" fill="none" stroke="#3aa0d8" stroke-width="1.4"/></svg>
<svg class="a" style="left:545px;top:153px;" width="17" height="16" viewBox="0 0 17 16"><path d="M1.5 1.5H6.5L8.5 3.5V11.5H1.5Z" fill="#fff" stroke="#6b6b6b" stroke-width="1"/><path d="M3 5.5H5.5M3 7.5H5.5" stroke="#1a8ad4" stroke-width="1"/><path d="M6.5 5.5H12L15.5 9V15.5H6.5Z" fill="#fff" stroke="#6b6b6b" stroke-width="1"/><path d="M8.5 10.5H13.5M8.5 12.5H13.5" stroke="#1a8ad4" stroke-width="1"/></svg>
<svg class="a" style="left:546px;top:175px;" width="17" height="17" viewBox="0 0 17 17"><rect x="1" y="2.5" width="11" height="13" fill="#fbc17c"/><rect x="3.5" y="1" width="6" height="3" fill="#7a7a7a"/><path d="M7.5 7.5H12.5L15.5 10.5V16.5H7.5Z" fill="#fff" stroke="#6b6b6b" stroke-width="1"/></svg>
<svg class="a" style="left:571px;top:198px;" width="23" height="24" viewBox="0 0 23 24"><rect x="0.5" y="3" width="16" height="19" fill="#fbc17c"/><rect x="4" y="1.5" width="9" height="4" fill="#7a7a7a"/><rect x="6.5" y="0" width="4" height="2.5" rx="1.2" fill="#7a7a7a"/><path d="M11.5 10.5H18.5L22 14V23.5H11.5Z" fill="#fff" stroke="#555" stroke-width="1"/></svg>
<svg class="a" style="left:545px;top:254px;" width="18" height="18" viewBox="0 0 18 18"><circle cx="10.5" cy="7" r="6" fill="none" stroke="#2b8fd1" stroke-width="1.6"/><path d="M6 11.5L1.5 16" stroke="#2b8fd1" stroke-width="2.6"/><circle cx="10.5" cy="4" r="1" fill="#333"/><path d="M10.5 6V10" stroke="#333" stroke-width="1.6"/></svg>
<svg class="a" style="left:545px;top:354px;" width="17" height="16" viewBox="0 0 17 16"><rect x="3.5" y="2.5" width="13" height="13" fill="#fff" stroke="#666"/><path d="M6 7H15M8 10H15M6 13H13" stroke="#2b8fd1" stroke-width="1.8"/><path d="M6 0L1 7H4L2 12L8 4H5Z" fill="#f7a94b"/></svg>
<svg class="a" style="left:545px;top:428px;" width="17" height="17" viewBox="0 0 17 17"><path d="M6.5 2.5H15.5V11.5H9.5L6.5 14.5V11.5H3.5V7" fill="none" stroke="#6b6b6b" stroke-width="1"/><path d="M3.5 0.5V6.5M0.5 3.5H6.5" stroke="#2a9a9a" stroke-width="1.8"/></svg>
<svg class="a" style="left:546px;top:454px;" width="16" height="17" viewBox="0 0 16 17"><rect x="0.5" y="1.5" width="14" height="15" fill="#fff" stroke="#666"/><rect x="0.5" y="0.5" width="14" height="2.5" fill="#2b8fd1"/><circle cx="4" cy="7.5" r="1.2" fill="none" stroke="#666"/><circle cx="4" cy="12" r="1.2" fill="none" stroke="#666"/><path d="M7 7.5H12M7 12H12" stroke="#666"/></svg>
<svg class="a" style="left:545px;top:527px;" width="18" height="17" viewBox="0 0 18 17"><circle cx="8" cy="6" r="5.3" fill="#fff" stroke="#777" stroke-width="1.1"/><path d="M2.7 6H13.3M8 0.7V11.3M4.5 3H11.5M4.5 9H11.5" stroke="#777" stroke-width="1"/><rect x="1" y="9.5" width="9" height="6" rx="3" fill="none" stroke="#2b8fd1" stroke-width="2"/><rect x="7" y="9.5" width="9" height="6" rx="3" fill="none" stroke="#2b8fd1" stroke-width="2"/></svg>
<div class="a" style="left:542px;top:148.5px;width:111px;height:27px;background:transparent;border:3px solid #f00;border-radius:10px"></div>
<div class="a" style="left:556px;top:564px;width:262px;height:57px;background:#fff;border:1px solid #c6c6c6;box-shadow:1px 1px 3px rgba(0,0,0,.18)"></div>
<div class="a" style="left:560px;top:568px;width:64px;height:24px;background:#fff;border:1px solid #c6c6c6"></div>
<div class="a" style="left:623px;top:568px;width:47px;height:24px;background:#fff;border:1px solid #c6c6c6"></div>
<div class="t" style="left:563.3px;top:573.4px;font-size:12px;line-height:13.8px;color:#262626;">Calibri</div>
<div class="t" style="left:627px;top:573.4px;font-size:12px;line-height:13.8px;color:#262626;">11</div>
<svg class="a" style="left:613.5px;top:579px;" width="6" height="4" viewBox="0 0 6 4"><path d="M0 0H6L3 3Z" fill="#555"/></svg>
<svg class="a" style="left:659.4px;top:579px;" width="6" height="4" viewBox="0 0 6 4"><path d="M0 0H6L3 3Z" fill="#555"/></svg>
<svg class="a" style="left:675px;top:572px;" width="15" height="15" viewBox="0 0 15 15"><path d="M1.5 14L5.5 3.5H6.5L10.5 14M3 10H9" fill="none" stroke="#3f465a" stroke-width="1.5"/><path d="M9 3.8L11.5 1L14 3.8Z" fill="#2b8fd1"/></svg>
<svg class="a" style="left:697px;top:572px;" width="14" height="15" viewBox="0 0 14 15"><path d="M1.5 14L4.5 6H5.5L8.5 14M2.7 11H7.3" fill="none" stroke="#3f465a" stroke-width="1.4"/><path d="M8 1H13L10.5 3.8Z" fill="#2b8fd1"/></svg>
<svg class="a" style="left:716px;top:571px;" width="18" height="18" viewBox="0 0 18 18"><rect x="1.5" y="1.5" width="14" height="7" fill="#fff" stroke="#1a7fc9" stroke-width="2"/><circle cx="8" cy="5" r="1.8" fill="#1a7fc9"/><ellipse cx="13" cy="9" rx="3.2" ry="1.4" fill="#f9b460"/><path d="M11 11.3H16M11 13.3H16" stroke="#f9b460" stroke-width="1"/><ellipse cx="8" cy="13.5" rx="3.2" ry="1.4" fill="#f9b460"/><path d="M5 15.8H11" stroke="#f9b460" stroke-width="1.2"/></svg>
<svg class="a" style="left:738.3px;top:579px;" width="6" height="4" viewBox="0 0 6 4"><path d="M0 0H6L3 3Z" fill="#666"/></svg>
<svg class="a" style="left:753px;top:574px;" width="13" height="12" viewBox="0 0 13 12"><path d="M11.5 0.8L2 11.5" stroke="#3f465e" stroke-width="1.1"/><ellipse cx="3.2" cy="3.2" rx="2.3" ry="2.5" fill="none" stroke="#3f465e" stroke-width="1.2"/><ellipse cx="9.8" cy="8.8" rx="2.3" ry="2.5" fill="none" stroke="#3f465e" stroke-width="1.2"/></svg>
<div class="t" style="left:773px;top:575.23px;font-size:9.5px;line-height:10.92px;color:#3f465e;font-weight:bold;letter-spacing:-0.453px;">000</div>
<svg class="a" style="left:793px;top:571px;" width="17" height="17" viewBox="0 0 17 17"><rect x="1.5" y="1.5" width="14" height="14" fill="#fff" stroke="#777" stroke-width="1.5"/><path d="M1 4.5H16M1 12.5H16M8.5 1V4.5M8.5 12.5V16" stroke="#777" stroke-width="1.2"/><path d="M3.5 8.5H13.5M5.5 6.5L3.3 8.5L5.5 10.5M11.5 6.5L13.7 8.5L11.5 10.5" fill="none" stroke="#1a7fc9" stroke-width="1.1"/></svg>
<div class="t" style="left:564.5px;top:596.65px;font-size:13px;line-height:14.95px;color:#444b5a;font-weight:bold;">Ж</div>
<div class="t" style="left:587.5px;top:596.65px;font-size:13px;line-height:14.95px;color:#444b5a;font-weight:bold;font-style:italic">К</div>
<svg class="a" style="left:608px;top:598px;" width="15" height="14" viewBox="0 0 15 14"><path d="M0.5 1.5H14.5M2.5 4.5H12.5M0.5 7.5H14.5M2.5 10.5H12.5" stroke="#707070" stroke-width="1"/></svg>
<svg class="a" style="left:628px;top:593px;" width="18" height="18" viewBox="0 0 18 18"><path d="M2.5 8.5L8.5 2.5L14.5 8.5L8.5 14.5Z" fill="#fff" stroke="#6a6a6a" stroke-width="1.1"/><path d="M6 5.5V2A1.8 1.8 0 0 1 9.6 2V6" fill="none" stroke="#6a6a6a" stroke-width="1.1"/><path d="M14.8 6.5L17 9L15.5 12.5L14.5 9Z" fill="#1a8ad4"/><rect x="1" y="14.2" width="16" height="3.6" fill="#ffff00"/></svg>
<svg class="a" style="left:650.8px;top:602px;" width="6" height="4" viewBox="0 0 6 4"><path d="M0 0H6L3 3Z" fill="#666"/></svg>
<svg class="a" style="left:662px;top:595px;" width="17" height="16" viewBox="0 0 17 16"><path d="M4.5 12L8 2H9L12.5 12M5.8 8.5H11.2" fill="none" stroke="#3f465a" stroke-width="1.6"/><rect x="1" y="12.3" width="16" height="3.4" fill="#ff0000"/></svg>
<svg class="a" style="left:684.4px;top:602px;" width="6" height="4" viewBox="0 0 6 4"><path d="M0 0H6L3 3Z" fill="#666"/></svg>
<svg class="a" style="left:698px;top:597px;" width="14" height="14" viewBox="0 0 14 14"><g fill="#6a6a6a"><rect x="0" y="0" width="1" height="1"/><rect x="2" y="0" width="1" height="1"/><rect x="4" y="0" width="1" height="1"/><rect x="6" y="0" width="1" height="1"/><rect x="8" y="0" width="1" height="1"/><rect x="10" y="0" width="1" height="1"/><rect x="12" y="0" width="1" height="1"/><rect x="0" y="6" width="1" height="1"/><rect x="2" y="6" width="1" height="1"/><rect x="4" y="6" width="1" height="1"/><rect x="6" y="6" width="1" height="1"/><rect x="8" y="6" width="1" height="1"/><rect x="10" y="6" width="1" height="1"/><rect x="12" y="6" width="1" height="1"/><rect x="0" y="2" width="1" height="1"/><rect x="0" y="4" width="1" height="1"/><rect x="0" y="6" width="1" height="1"/><rect x="0" y="8" width="1" height="1"/><rect x="0" y="10" width="1" height="1"/><rect x="6" y="2" width="1" height="1"/><rect x="6" y="4" width="1" height="1"/><rect x="6" y="6" width="1" height="1"/><rect x="6" y="8" width="1" height="1"/><rect x="6" y="10" width="1" height="1"/><rect x="12" y="2" width="1" height="1"/><rect x="12" y="4" width="1" height="1"/><rect x="12" y="6" width="1" height="1"/><rect x="12" y="8" width="1" height="1"/><rect x="12" y="10" width="1" height="1"/></g><rect x="0" y="12" width="13" height="1.5" fill="#666"/></svg>
<svg class="a" style="left:718.3px;top:602px;" width="6" height="4" viewBox="0 0 6 4"><path d="M0 0H6L3 3Z" fill="#666"/></svg>
<svg class="a" style="left:731px;top:595px;" width="17" height="16" viewBox="0 0 17 16"><path d="M1 3.5H7M3.8 1L1 3.5L3.8 6" fill="none" stroke="#1a7fc9" stroke-width="1.6"/><text x="9.5" y="7" font-size="9" fill="#3f465e" font-family="Liberation Sans">0</text><text x="0.5" y="15" font-size="9" fill="#3f465e" font-family="Liberation Sans">,00</text></svg>
<svg class="a" style="left:753px;top:595px;" width="17" height="16" viewBox="0 0 17 16"><text x="1.5" y="7" font-size="9" fill="#3f465e" font-family="Liberation Sans">,00</text><path d="M0.5 11H7M4.5 8.5L7 11L4.5 13.5" fill="none" stroke="#1a7fc9" stroke-width="1.6"/><text x="7" y="15" font-size="9" fill="#3f465e" font-family="Liberation Sans">,0</text></svg>
<svg class="a" style="left:776px;top:595px;" width="17" height="15" viewBox="0 0 17 15"><path d="M1 9.5L6 4.5L10 8.5L5 13.5Z" fill="#f9b46a"/><path d="M6.5 4L9.5 1L13.5 5L10.5 8Z" fill="#6b6b6b"/><path d="M11 3L14.5 0.5L16 2L13 5" fill="#6b6b6b"/></svg>
<svg class="a" style="left:836px;top:348px;" width="92" height="82" viewBox="0 0 92 82"><path d="M3.8 3.6L39 15.1Q30.5 18.8 26.2 20.4L86.6 74.6L82.2 78.6L23.1 24.9Q21.5 28.5 18.3 37.7Z" fill="#ff0000"/></svg>
<div class="a" style="left:0px;top:676px;width:1022px;height:28px;background:#e6e6e6;"></div>
<div class="a" style="left:0px;top:676px;width:1022px;height:1px;background:#ababab;"></div>
<svg class="a" style="left:24px;top:684px;" width="6" height="10" viewBox="0 0 6 10"><path d="M5 0.5L0.5 5L5 9.5Z" fill="#c0c0c0"/></svg>
<svg class="a" style="left:54px;top:684px;" width="6" height="10" viewBox="0 0 6 10"><path d="M0.5 0.5L5 5L0.5 9.5Z" fill="#c0c0c0"/></svg>
<div class="a" style="left:99px;top:676px;width:107px;height:25px;background:#fff;border-left:1px solid #ababab;border-right:1px solid #ababab"></div>
<div class="a" style="left:99px;top:699px;width:107px;height:2px;background:#007541;"></div>
<div class="t" style="left:111.5px;top:683.08px;font-size:12.7px;line-height:14.6px;color:#007541;font-weight:bold;letter-spacing:0.022px;">microexcel.ru</div>
<svg class="a" style="left:238px;top:681px;" width="18" height="18" viewBox="0 0 18 18"><circle cx="9" cy="9" r="7.8" fill="none" stroke="#7a7a7a" stroke-width="1.2"/><path d="M9 4.5V13.5M4.5 9H13.5" stroke="#666" stroke-width="1.6"/></svg>
<div class="a" style="left:613.5px;top:684px;width:1.6px;height:1.6px;background:#999;"></div>
<div class="a" style="left:613.5px;top:688px;width:1.6px;height:1.6px;background:#999;"></div>
<div class="a" style="left:613.5px;top:692px;width:1.6px;height:1.6px;background:#999;"></div>
<div class="a" style="left:631px;top:683px;width:16px;height:15px;background:#fff;border:1px solid #c6c6c6"></div>
<svg class="a" style="left:636px;top:686px;" width="6" height="9" viewBox="0 0 6 9"><path d="M5 0.5L0.5 4.5L5 8.5Z" fill="#555"/></svg>
<div class="a" style="left:646px;top:683px;width:303px;height:15px;background:#fff;border:1px solid #c6c6c6"></div>
<div class="a" style="left:949px;top:683px;width:40px;height:15px;background:#dcdcdc;"></div>
<div class="a" style="left:989px;top:683px;width:15px;height:15px;background:#fff;border:1px solid #c6c6c6"></div>
<svg class="a" style="left:994px;top:686px;" width="6" height="9" viewBox="0 0 6 9"><path d="M0.5 0.5L5 4.5L0.5 8.5Z" fill="#555"/></svg>
<div class="a" style="left:0px;top:704px;width:1022px;height:21px;background:#f3f3f3;"></div>
<div class="a" style="left:0px;top:704px;width:1022px;height:1px;background:#d4d4d4;"></div>
<div class="t" style="left:7.3px;top:708.51px;font-size:11.3px;line-height:12.99px;color:#262626;letter-spacing:0.202px;">Готово</div>
<svg class="a" style="left:70px;top:707px;" width="16" height="16" viewBox="0 0 16 16"><circle cx="4" cy="4" r="2.9" fill="#444c66"/><path d="M8.2 2.5H13.5V13.5H2.5V8" fill="none" stroke="#444c66" stroke-width="1.3"/><rect x="8.2" y="2.2" width="5.6" height="2.4" fill="#444c66"/><path d="M7.8 7.3H9.2M10.8 7.3H12.2M4.8 9.3H6.2M7.8 9.3H9.2M10.8 9.3H12.2M4.8 11.3H6.2M7.8 11.3H9.2M10.8 11.3H12.2" stroke="#444c66" stroke-width="1.1"/></svg>
<div class="t" style="left:626.5px;top:709.21px;font-size:11.3px;line-height:12.99px;color:#262626;letter-spacing:0.035px;">Количество: 15</div>
<div class="a" style="left:725px;top:705px;width:37px;height:20px;background:#c8c8c8;"></div>
<svg class="a" style="left:736px;top:707px;" width="15" height="15" viewBox="0 0 15 15"><rect x="1.5" y="1.5" width="12" height="12" fill="none" stroke="#7a7a7a" stroke-width="1"/><path d="M1.5 4.5H13.5M1.5 7.5H13.5M1.5 10.5H13.5M4.5 1.5V13.5M7.5 1.5V13.5M10.5 1.5V13.5" stroke="#7a7a7a" stroke-width="1"/></svg>
<svg class="a" style="left:774px;top:707px;" width="16" height="15" viewBox="0 0 16 15"><rect x="0.5" y="1.5" width="14" height="12" fill="none" stroke="#666" stroke-width="1"/><rect x="3.5" y="4.5" width="8" height="6" fill="none" stroke="#666" stroke-width="1"/><path d="M5 6.5H10M5 8.5H10" stroke="#666" stroke-width="1"/></svg>
<svg class="a" style="left:812px;top:707px;" width="16" height="15" viewBox="0 0 16 15"><rect x="0.5" y="1.5" width="14" height="12" fill="none" stroke="#666" stroke-width="1"/><path d="M4.5 1.5V7.5H10.5V1.5M7.5 1.5V7.5" fill="none" stroke="#666" stroke-width="1"/></svg>
<div class="a" style="left:844px;top:714px;width:6px;height:1.6px;background:#555;"></div>
<div class="a" style="left:854px;top:714px;width:100px;height:1px;background:#aaa;"></div>
<div class="a" style="left:902px;top:709px;width:5px;height:11px;background:#666;"></div>
<svg class="a" style="left:957px;top:709px;" width="9" height="9" viewBox="0 0 9 9"><path d="M4.5 0V9M0 4.5H9" stroke="#555" stroke-width="1.6"/></svg>
<div class="t" style="left:976px;top:709.21px;font-size:11.3px;line-height:12.99px;color:#262626;letter-spacing:-0.409px;">100 %</div>
<div class="a" style="left:0px;top:64px;width:1px;height:661px;background:#007541;"></div>
<div class="a" style="left:1021px;top:64px;width:1px;height:661px;background:#007541;"></div>
<div class="a" style="left:0px;top:723.5px;width:1022px;height:1.5px;background:#007541;"></div>
</body></html>
